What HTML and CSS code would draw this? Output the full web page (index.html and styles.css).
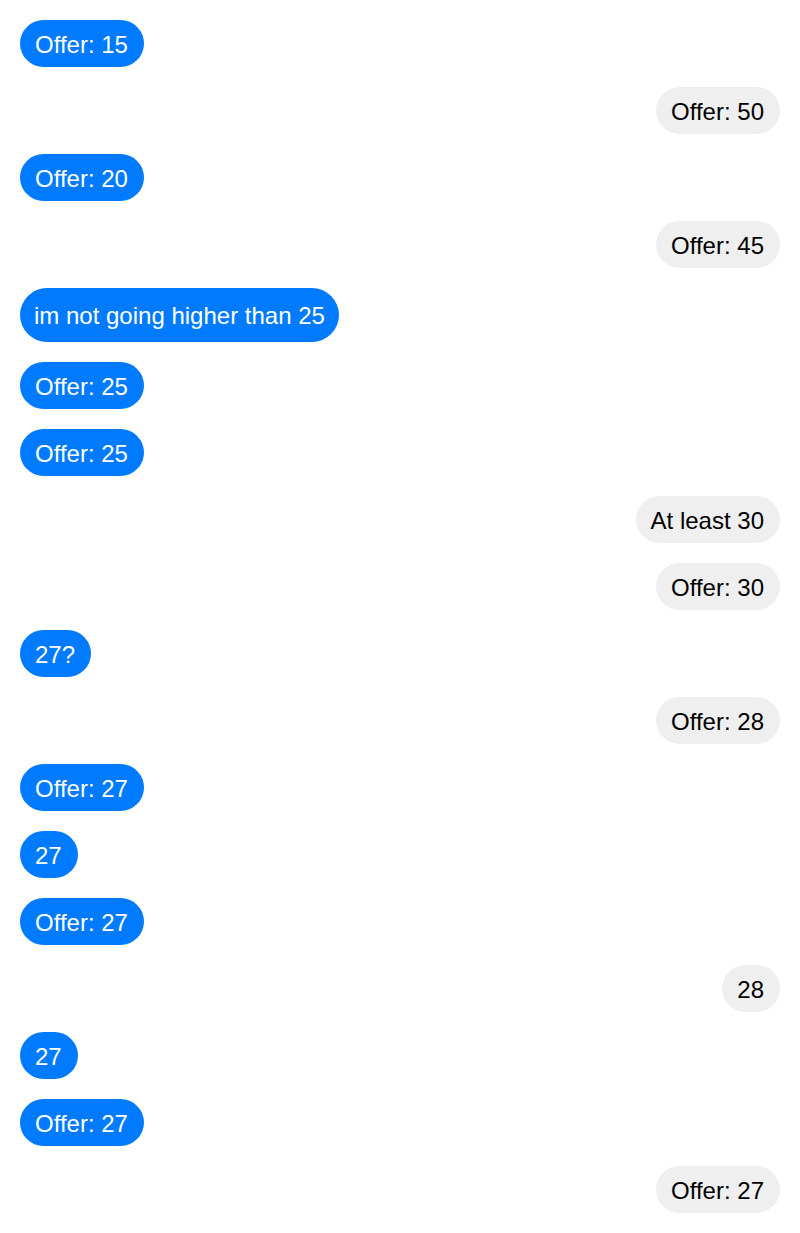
FILE: index.html
```html
<!DOCTYPE html>
<html>
<head>
<meta charset="utf-8">
<link rel="stylesheet" href="styles.css">
</head>
<body>
<div class="chat">
  <div class="msg them">Offer: 15</div>
  <div class="msg me">Offer: 50</div>
  <div class="msg them">Offer: 20</div>
  <div class="msg me">Offer: 45</div>
  <div class="msg them tall">im not going higher than 25</div>
  <div class="msg them">Offer: 25</div>
  <div class="msg them">Offer: 25</div>
  <div class="msg me">At least 30</div>
  <div class="msg me">Offer: 30</div>
  <div class="msg them">27?</div>
  <div class="msg me">Offer: 28</div>
  <div class="msg them">Offer: 27</div>
  <div class="msg them">27</div>
  <div class="msg them">Offer: 27</div>
  <div class="msg me">28</div>
  <div class="msg them">27</div>
  <div class="msg them">Offer: 27</div>
  <div class="msg me">Offer: 27</div>
</div>
</body>
</html>
```

FILE: styles.css
```css
html, body {
  margin: 0;
  padding: 0;
  background: #ffffff;
}
body {
  font-family: "Liberation Sans", Arial, sans-serif;
}
.chat {
  display: flex;
  flex-direction: column;
  gap: 20px;
  padding: 20px;
}
.msg {
  font-size: 24px;
  line-height: 27px;
  padding: 11px 16px 9px 15px;
  border-radius: 24px;
  white-space: nowrap;
}
.msg.tall {
  padding: 14px 14px 13px 14px;
  border-radius: 27px;
}
.them {
  align-self: flex-start;
  background: #007bff;
  color: #ffffff;
}
.me {
  align-self: flex-end;
  background: #efefef;
  color: #000000;
}
```
